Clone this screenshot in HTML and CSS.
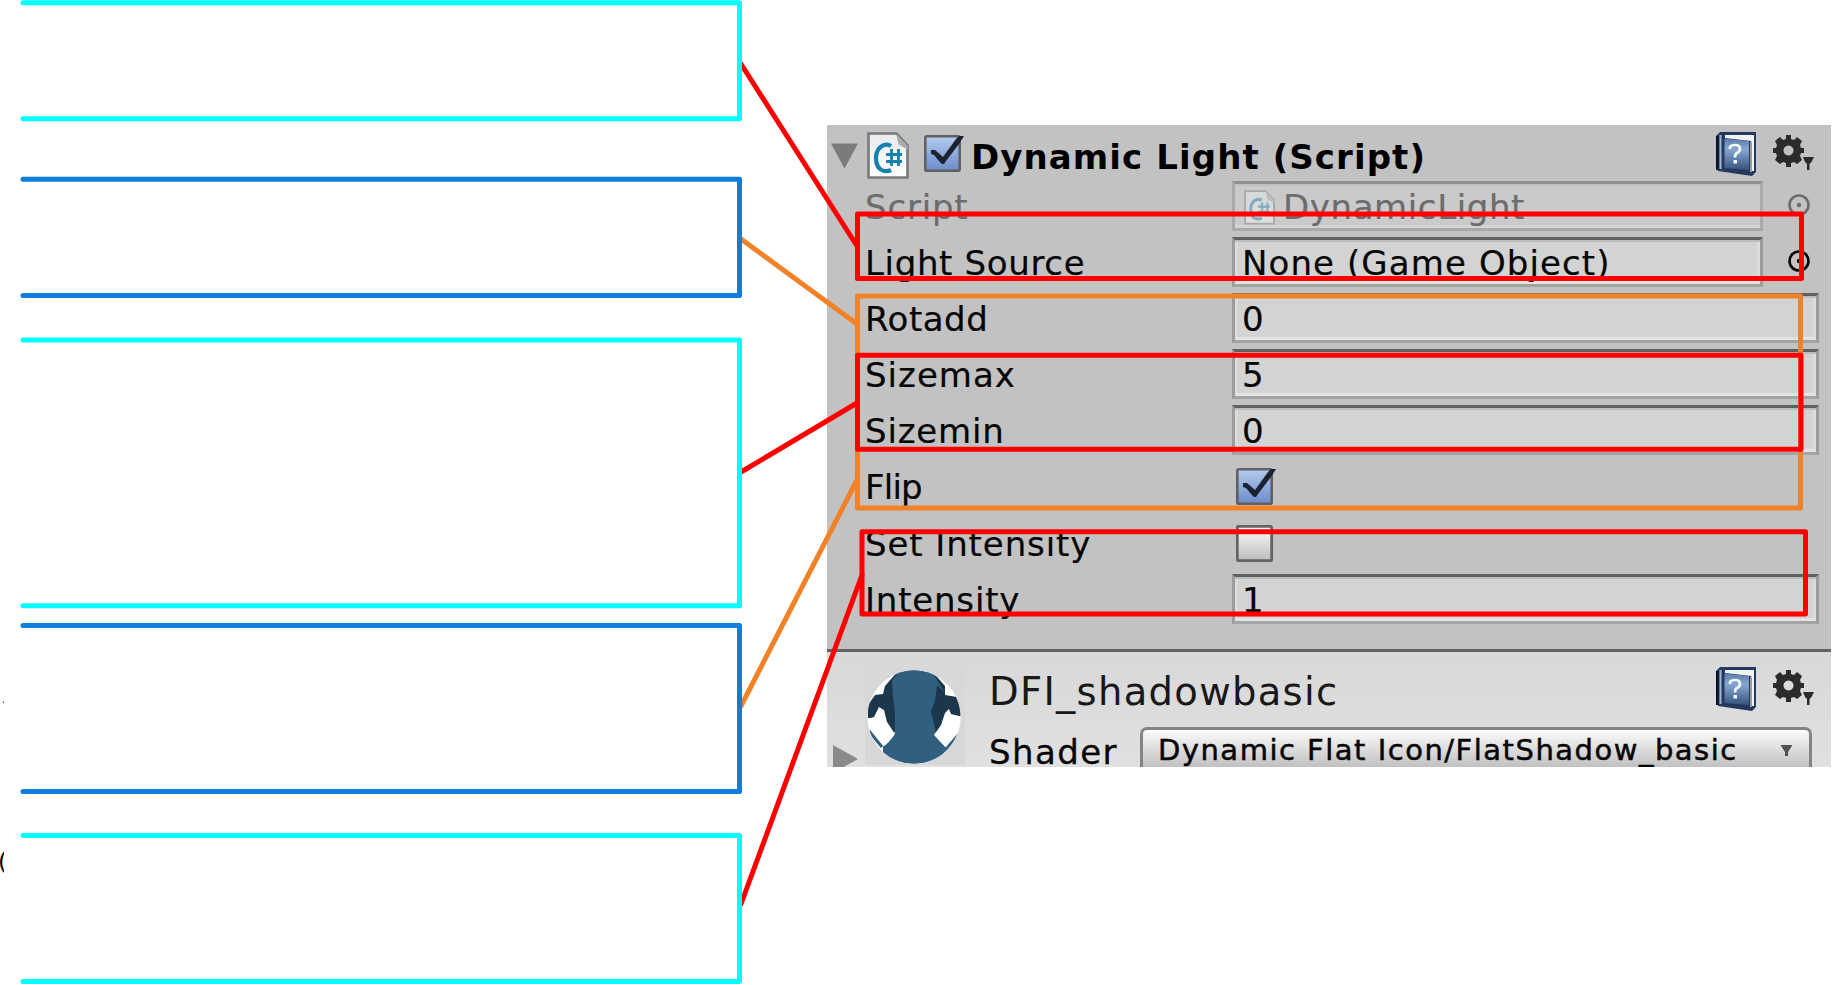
FILE: index.html
```html
<!DOCTYPE html>
<html lang="en">
<head>
<meta charset="utf-8">
<title>Dynamic Light</title>
<link rel="stylesheet" href="styles.css">
</head>
<body>
<svg class="defs" width="0" height="0">
  <defs>
    <linearGradient id="blue" x1="0" y1="0" x2="0" y2="1"><stop offset="0" stop-color="#b5cbee"/><stop offset="1" stop-color="#6c8cc9"/></linearGradient>
    <linearGradient id="grey" x1="0" y1="0" x2="0" y2="1"><stop offset="0" stop-color="#fff"/><stop offset="1" stop-color="#bdbbbd"/></linearGradient>
    <linearGradient id="page" x1="0" y1="0" x2="0" y2="1"><stop offset="0" stop-color="#e8ebef"/><stop offset="1" stop-color="#fff"/></linearGradient>
    <linearGradient id="cover" x1="0" y1="0" x2="0" y2="1"><stop offset="0" stop-color="#5c7cad"/><stop offset=".35" stop-color="#86a6d1"/><stop offset="1" stop-color="#36537f"/></linearGradient>
    <symbol id="check" viewBox="0 0 40 38">
      <rect x="1.3" y="1.3" width="34.4" height="34.4" rx="1.5" fill="url(#blue)" stroke="#5f6063" stroke-width="2.6"/>
      <path d="M7 15h4l8 7L32 4l3-3h5l-5 8-13 17-2 3h-2l-3-3-5-6-3-1z" fill="#1b2230"/>
    </symbol>
    <symbol id="uncheck" viewBox="0 0 40 38">
      <rect x="1.3" y="1.3" width="34.4" height="34.4" rx="1.5" fill="url(#grey)" stroke="#646464" stroke-width="2.8"/>
    </symbol>
    <symbol id="cs" viewBox="0 0 42 47">
      <path d="M1.500 1.500h28l11 12v32h-39z" fill="url(#page)" stroke="#77797b" stroke-width="2.600"/>
      <path d="M29 1.500l11.500 12v4l-9-5z" fill="#a9adb1"/>
      <path d="M24 14q-3-2-7-1-8 3-8 13 0 11 8 13 4 .5 7-1" fill="none" stroke="#1382b0" stroke-width="4.200"/>
      <path d="M24.500 17v17M31.500 17v17M19 22.500h16M19 29.500h16" fill="none" stroke="#1382b0" stroke-width="2.800"/>
    </symbol>
    <symbol id="book" viewBox="0 0 41 44">
      <path d="M0 4L4 0h36v40l-4 4-34-5z" fill="#25395e"/>
      <path d="M0 4h2.500v34H0z" fill="#071226"/>
      <path d="M3.500 3h2v34h-2z" fill="#9fb7d5"/>
      <path d="M9 3h29v36h-3V9L9 6z" fill="#f2f3f5"/>
      <path d="M34 10h2v30h-2z" fill="#a19a97"/>
      <path d="M8.500 6.500L33 9v29L8.500 36z" fill="url(#cover)"/>
      <path d="M14 17v-2q1-2 5-2 5 0 5 4 0 2.500-3 4-2 1-2 4.500" fill="none" stroke="#f3f6fa" stroke-width="2.700"/>
      <rect x="17.500" y="28" width="3.500" height="3.500" fill="#f3f6fa"/>
    </symbol>
    <symbol id="gear" viewBox="0 0 42 36">
      <g fill="#2b2b2b">
        <path fill-rule="evenodd" d="M13 0h5v4l3 1 3-3 5 4-2 4 1 3h3v5h-3l-1 3 2 4-5 4-3-2-3 1v4h-5v-4l-3-1-3 2-5-4 2-4-1-3H0v-5h3l1-3-2-4 5-4 3 3 3-1zM15.500 10.500a5 5 0 1 0 .01 0z"/>
        <path d="M30 22h11l-2.500 5-2 2v6h-2.500v-6l-2-2z"/>
      </g>
    </symbol>
    <symbol id="picker" viewBox="0 0 24 24">
      <circle cx="12" cy="12" r="9.500" fill="none" stroke="currentColor" stroke-width="2.600"/>
      <circle cx="12" cy="12" r="2.200" fill="currentColor"/>
    </symbol>
  </defs>
</svg>
<main class="stage">
  <aside class="margin"><span class="dot">.</span><span class="paren">(</span></aside>
  <section class="inspector">
    <header class="head">
      <svg class="fold" viewBox="0 0 28 26"><path d="M0 0h28L14 26z" fill="#7b7b7b"/></svg>
      <svg class="cs"><use href="#cs"/></svg>
      <svg class="box headbox"><use href="#check"/></svg>
      <h1 class="title">Dynamic Light (Script)</h1>
      <svg class="book"><use href="#book"/></svg>
      <svg class="gear"><use href="#gear"/></svg>
    </header>
    <div class="rows">
      <div class="row disabled"><span class="label l-script">Script</span><div class="field short"><svg class="mini"><use href="#cs"/></svg><span class="v-script">DynamicLight</span></div><svg class="picker"><use href="#picker"/></svg></div>
      <div class="row"><span class="label l-source">Light Source</span><div class="field short"><span class="v-none">None (Game Object)</span></div><svg class="picker"><use href="#picker"/></svg></div>
      <div class="row"><span class="label l-rot">Rotadd</span><div class="field">0</div></div>
      <div class="row"><span class="label l-max">Sizemax</span><div class="field">5</div></div>
      <div class="row"><span class="label l-min">Sizemin</span><div class="field">0</div></div>
      <div class="row"><span class="label l-flip">Flip</span><svg class="box"><use href="#check"/></svg></div>
      <div class="row"><span class="label l-set">Set Intensity</span><svg class="box"><use href="#uncheck"/></svg></div>
      <div class="row"><span class="label l-int">Intensity</span><div class="field">1</div></div>
    </div>
    <footer class="material">
      <svg class="fold2" viewBox="0 0 25 28"><path d="M0 0l25 14L0 28z" fill="#8a8a8a"/></svg>
      <svg class="thumb" viewBox="0 0 100 98">
        <defs><clipPath id="ball"><circle cx="49" cy="50" r="46.500"/></clipPath></defs>
        <rect width="100" height="98" fill="#d8d8d8"/>
        <g clip-path="url(#ball)">
          <rect width="100" height="98" fill="#fff"/>
          <path d="M20 19L34 3h32l14 16v9l12 2 6 9v10H86l-9 16H24L15 41l-4 10H3V38l7-10 8-1z" fill="#1c364b"/>
          <path d="M27 14L35 3h31l14 23-8-8-2 16-4 10 5 22 15 16v18H18V78l12-13V45l-2-15z" fill="#305f80"/>
          <path d="M2 52l7-2 5-10 5 3 3 12 8 12-10 13-6-3-8-14zM98 50l-12-3-2-5-4 4-4 12-7 10 11 12 7-2 8-12z" fill="#fff"/>
          <path d="M18 80l12-10h39l10 9v19H18z" fill="#305f80"/>
          <path d="M4 64l13 16M95 66L83 80" stroke="#305f80" stroke-width="3"/>
        </g>
      </svg>
      <div class="info">
        <div class="name">DFI_shadowbasic</div>
        <div class="shader"><span class="s-label">Shader</span><div class="select"><span class="s-value">Dynamic Flat Icon/FlatShadow_basic</span><svg class="arrow" viewBox="0 0 12 12"><path d="M0 0h12L7.500 7v4h-3V7z" fill="#515151"/></svg></div></div>
      </div>
      <svg class="book"><use href="#book"/></svg>
      <svg class="gear"><use href="#gear"/></svg>
    </footer>
  </section>
  <svg class="notes" viewBox="0 0 1832 985">
    <g class="line">
      <g class="red"><path d="M741 64L857 246M741 472L857 403M741 904L862 575"/></g>
      <g class="orange"><path d="M741 239L857 324M741 706L857 480"/><path d="M857.500 296H1800.500V508H857.500z"/></g>
      <g class="red"><path d="M857.500 214H1801.500V278.500H857.500z"/><path d="M857.500 355.300H1801V449.300H857.500z"/><path d="M862 531.800H1805.500V614H862z"/></g>
      <g class="cyan"><path d="M23 2.700H739.500V118.800H23M23 340H739.500V605.800H23M23 835.500H739.500V981.600H23"/></g>
      <g class="blue"><path d="M23 179.300H739.500V295.500H23M23 625.500H739.500V791.500H23"/></g>
    </g>
  </svg>
</main>
</body>
</html>
```

FILE: styles.css
```css
* { box-sizing: border-box; }
body { margin: 0; background: #fff; font-family: "DejaVu Sans", sans-serif; color: #050505; }
svg { display: block; flex: none; }
.defs { position: absolute; }
.stage { position: relative; width: 1832px; height: 985px; overflow: hidden; display: flex; }
.margin { width: 4px; margin-right: 823px; overflow: hidden; padding-top: 688px; display: flex; flex-direction: column; flex: none; color: #000; }
.dot { font-size: 10px; line-height: 24px; height: 138px; padding-left: 2px; }
.paren { font-size: 23px; line-height: 28px; margin-left: -2px; padding-top: 22px; }
.inspector { width: 1004px; height: 642px; margin-top: 125px; background: #c2c2c2; overflow: hidden; flex: none; display: flex; flex-direction: column; font-size: 34px; white-space: nowrap; }
.head { display: flex; height: 56px; padding: 0 17px 0 4px; flex: none; }
.fold { width: 27px; height: 26px; margin-top: 18px; }
.cs { width: 42px; height: 47px; margin: 7px 0 0 9px; }
.box { width: 40px; height: 38px; margin: 7px 0 0 4px; }
.headbox { margin: 10px 0 0 15px; }
.title { margin: 0 0 0 7px; font-size: 34px; line-height: 40px; padding-top: 12px; letter-spacing: 1.080px; color: #000; }
.book { width: 41px; height: 44px; margin-top: 7px; flex: none; }
.gear { width: 42px; height: 36px; margin: 10px 0 0 16px; }
.head .book { margin-left: auto; }
.head .gear { margin-right: -1px; }
.rows { height: 468px; padding-left: 38px; flex: none; }
.row { display: flex; height: 56.100px; }
.label { width: 367px; line-height: 50px; flex: none; padding-top: 1px; -webkit-text-stroke: .2px; }
.field { width: 587px; height: 50px; line-height: 46px; border: 3px solid #9c9c9c; border-top-color: #606060; border-bottom-color: #a4a4a4; background: #d3d3d3; box-shadow: inset 0 -3px #e4e4e4, inset 0 2px #bcbcbc, inset 3px 0 #dcdcdc, inset -3px 0 #dcdcdc; padding-left: 7px; display: flex; -webkit-text-stroke: .2px; }
.short { width: 531px; }
.picker { width: 24px; height: 24px; margin: 12px 0 0 24px; }
.disabled { color: #6c6c6c; }
.disabled .field { background: #cacaca; border-color: #aaa; border-top-color: #909090; box-shadow: inset 0 -3px #d3d3d3, inset 0 2px #bfbfbf; }
.mini { width: 42px; height: 47px; margin: 6px -3px 0 2px; opacity: .4; transform: scale(.74); transform-origin: 0 0; }
.material { flex: 1; border-top: 3px solid #626262; background: linear-gradient(#d8d8d8, #e1e1e1); display: flex; padding: 0 17px 0 6px; }
.fold2 { width: 25px; height: 28px; margin-top: 93px; }
.thumb { width: 100px; height: 98px; margin: 15px 0 0 7px; }
.info { margin-left: 24px; width: 844px; flex: none; }
.name { font-size: 38.500px; line-height: 46px; height: 75px; padding-top: 17px; letter-spacing: 1.300px; color: #181818; }
.shader { display: flex; width: 850px; }
.s-label { width: 151px; line-height: 40px; padding-top: 5px; letter-spacing: 1.400px; flex: none; -webkit-text-stroke: .3px; }
.select { width: 672px; height: 50px; border: 3px solid #848484; border-radius: 7px; background: linear-gradient(#fcfcfc 0, #c0bec0 38px); display: flex; font-size: 29px; line-height: 40px; padding-left: 15px; -webkit-text-stroke: .5px; flex: none; }
.s-value { letter-spacing: 1.500px; }
.arrow { width: 13px; height: 12px; margin: 15px 0 0 42px; }
.material .book { margin: 15px 0 0 -117px; }
.material .gear { margin-top: 18px; }
.l-script { letter-spacing: .8px; }
.l-source { letter-spacing: .65px; }
.l-rot { letter-spacing: .5px; }
.l-max { letter-spacing: 1px; }
.l-min { letter-spacing: .8px; }
.l-flip { letter-spacing: -.8px; }
.l-set { letter-spacing: .9px; }
.l-int { letter-spacing: .8px; }
.v-script { letter-spacing: .6px; }
.v-none { letter-spacing: 1.100px; }
.notes { position: absolute; inset: 0; width: 1832px; height: 985px; }
.line { fill: none; stroke-width: 5px; stroke-linejoin: round; stroke-linecap: round; }
.red { stroke: #f00; }
.orange { stroke: #f28227; }
.cyan { stroke: #0ff; }
.blue { stroke: #0f7ddb; }
```
